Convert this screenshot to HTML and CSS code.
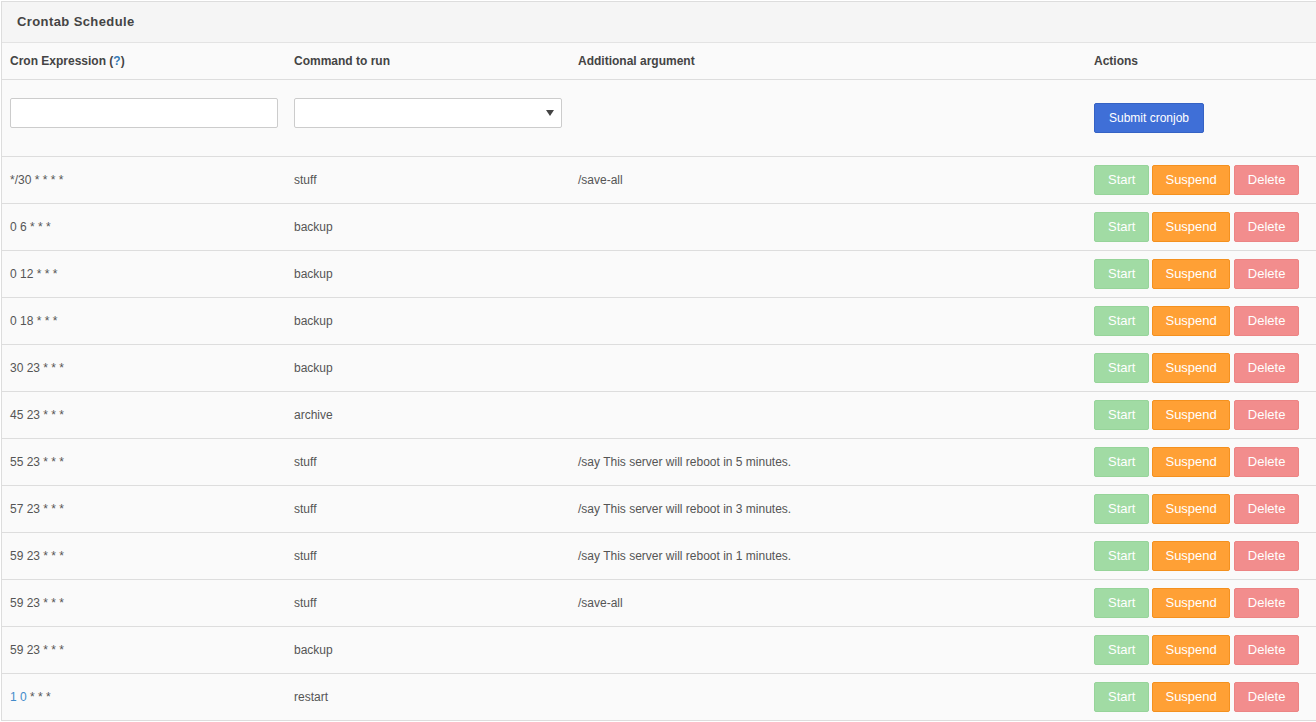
FILE: index.html
```html
<!DOCTYPE html>
<html lang="en">
<head>
	<meta charset="UTF-8">
	<title>Crontab Schedule</title>
	<link rel="stylesheet" href="styles.css">
</head>
<body>

	<div class="panel">
		<div class="panel-heading">Crontab Schedule</div>

		<table class="cron-table">
			<colgroup>
				<col class="col-expr">
				<col class="col-cmd">
				<col class="col-arg">
				<col class="col-actions">
			</colgroup>
			<thead>
				<tr>
					<th>Cron Expression (<a href="#help">?</a>)</th>
					<th>Command to run</th>
					<th>Additional argument</th>
					<th>Actions</th>
				</tr>
			</thead>
			<tbody>
				<tr class="form-row">
					<td><input type="text" class="form-control"></td>
					<td>
						<div class="select-wrap">
							<select class="form-control"><option></option></select>
						</div>
					</td>
					<td></td>
					<td><button class="btn btn-primary">Submit cronjob</button></td>
				</tr>
				<tr>
					<td>*/30 * * * *</td>
					<td>stuff</td>
					<td>/save-all</td>
					<td class="actions"><button class="btn btn-start">Start</button> <button class="btn btn-suspend">Suspend</button> <button class="btn btn-delete">Delete</button></td>
				</tr>
				<tr>
					<td>0 6 * * *</td>
					<td>backup</td>
					<td></td>
					<td class="actions"><button class="btn btn-start">Start</button> <button class="btn btn-suspend">Suspend</button> <button class="btn btn-delete">Delete</button></td>
				</tr>
				<tr>
					<td>0 12 * * *</td>
					<td>backup</td>
					<td></td>
					<td class="actions"><button class="btn btn-start">Start</button> <button class="btn btn-suspend">Suspend</button> <button class="btn btn-delete">Delete</button></td>
				</tr>
				<tr>
					<td>0 18 * * *</td>
					<td>backup</td>
					<td></td>
					<td class="actions"><button class="btn btn-start">Start</button> <button class="btn btn-suspend">Suspend</button> <button class="btn btn-delete">Delete</button></td>
				</tr>
				<tr>
					<td>30 23 * * *</td>
					<td>backup</td>
					<td></td>
					<td class="actions"><button class="btn btn-start">Start</button> <button class="btn btn-suspend">Suspend</button> <button class="btn btn-delete">Delete</button></td>
				</tr>
				<tr>
					<td>45 23 * * *</td>
					<td>archive</td>
					<td></td>
					<td class="actions"><button class="btn btn-start">Start</button> <button class="btn btn-suspend">Suspend</button> <button class="btn btn-delete">Delete</button></td>
				</tr>
				<tr>
					<td>55 23 * * *</td>
					<td>stuff</td>
					<td>/say This server will reboot in 5 minutes.</td>
					<td class="actions"><button class="btn btn-start">Start</button> <button class="btn btn-suspend">Suspend</button> <button class="btn btn-delete">Delete</button></td>
				</tr>
				<tr>
					<td>57 23 * * *</td>
					<td>stuff</td>
					<td>/say This server will reboot in 3 minutes.</td>
					<td class="actions"><button class="btn btn-start">Start</button> <button class="btn btn-suspend">Suspend</button> <button class="btn btn-delete">Delete</button></td>
				</tr>
				<tr>
					<td>59 23 * * *</td>
					<td>stuff</td>
					<td>/say This server will reboot in 1 minutes.</td>
					<td class="actions"><button class="btn btn-start">Start</button> <button class="btn btn-suspend">Suspend</button> <button class="btn btn-delete">Delete</button></td>
				</tr>
				<tr>
					<td>59 23 * * *</td>
					<td>stuff</td>
					<td>/save-all</td>
					<td class="actions"><button class="btn btn-start">Start</button> <button class="btn btn-suspend">Suspend</button> <button class="btn btn-delete">Delete</button></td>
				</tr>
				<tr>
					<td>59 23 * * *</td>
					<td>backup</td>
					<td></td>
					<td class="actions"><button class="btn btn-start">Start</button> <button class="btn btn-suspend">Suspend</button> <button class="btn btn-delete">Delete</button></td>
				</tr>
				<tr>
					<td><a href="#edit" class="hover-link">1 0</a> * * *</td>
					<td>restart</td>
					<td></td>
					<td class="actions"><button class="btn btn-start">Start</button> <button class="btn btn-suspend">Suspend</button> <button class="btn btn-delete">Delete</button></td>
				</tr>
			</tbody>
		</table>
	</div>

</body>
</html>
```

FILE: styles.css
```css
html, body {
	height: 100%;
}

body {
	margin: 0;
	padding: 1px 0 0 1px;
	box-sizing: border-box;
	overflow: hidden;
	background: #ffffff;
	font-family: "Liberation Sans", Arial, sans-serif;
	font-size: 12px;
	line-height: 20px;
	color: #555555;
}

a {
	color: #337ab7;
	text-decoration: none;
}

.panel {
	width: 1330px;
	border: 1px solid #dddddd;
	background: #fafafa;
}

.panel-heading {
	padding: 10px 15px;
	background: #f5f5f5;
	border-bottom: 1px solid #e3e3e3;
	font-size: 13px;
	font-weight: bold;
	letter-spacing: .4px;
	color: #444444;
}

.cron-table {
	width: 100%;
	border-collapse: collapse;
	table-layout: fixed;
}

.col-expr { width: 284px; }
.col-cmd { width: 284px; }
.col-arg { width: 516px; }

.cron-table th,
.cron-table td {
	padding: 8px;
	text-align: left;
	vertical-align: middle;
}

.cron-table th {
	font-weight: bold;
	color: #444444;
	border-bottom: 1px solid #dddddd;
}

.cron-table tbody td {
	border-bottom: 1px solid #dddddd;
	height: 30px;
}

.cron-table tbody tr:last-child td {
	border-bottom: none;
}

.cron-table .form-row td {
	height: 60px;
}

.form-control {
	display: block;
	box-sizing: border-box;
	width: 268px;
	height: 30px;
	margin: 10px 0 20px;
	padding: 4px 8px;
	border: 1px solid #cccccc;
	border-radius: 2px;
	background: #ffffff;
	font-family: inherit;
	font-size: 12px;
	color: #555555;
}

.select-wrap {
	position: relative;
	width: 268px;
}

.select-wrap select {
	-webkit-appearance: none;
	appearance: none;
}

.select-wrap::after {
	content: "";
	position: absolute;
	right: 8px;
	top: 12px;
	border-left: 4px solid transparent;
	border-right: 4px solid transparent;
	border-top: 6px solid #444444;
	pointer-events: none;
}

.btn {
	box-sizing: border-box;
	height: 30px;
	padding: 0 13px;
	margin: 0;
	border: 1px solid transparent;
	border-radius: 2px;
	font-family: inherit;
	font-size: 13px;
	line-height: 28px;
	color: #ffffff;
	vertical-align: middle;
	cursor: pointer;
}

.btn-primary {
	padding: 0 14px;
	font-size: 12px;
	background: #3f6fd7;
	border-color: #3562c4;
}

.actions {
	white-space: nowrap;
	font-size: 0;
}

.actions .btn {
	margin-right: 3px;
	font-size: 13px;
}

.actions .btn-suspend {
	padding: 0 12px;
	margin-right: 4px;
}

.btn-start {
	background: #a1dba4;
	border-color: #97d49a;
}

.btn-suspend {
	background: #ffa035;
	border-color: #f4911f;
}

.btn-delete {
	background: #f28d8d;
	border-color: #ec8484;
}

.hover-link {
	color: #428bca;
}
```
